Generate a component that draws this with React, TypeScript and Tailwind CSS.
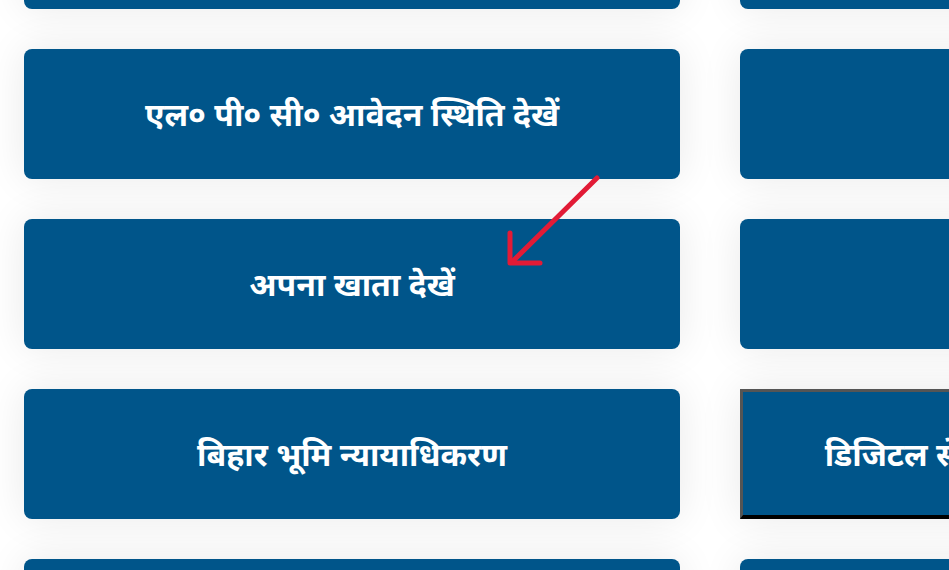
import React from "react";

const left = [
  "भू-नक्शा देखें",
  "एल० पी० सी० आवेदन स्थिति देखें",
  "अपना खाता देखें",
  "बिहार भूमि न्यायाधिकरण",
  "ऑनलाइन भुगतान",
];
const right = [
  "भू-लगान",
  "दाखिल-खारिज",
  "भूमि विवरण",
  "डिजिटल सेवा केंद्र का पता यहाँ से लगाएं",
  "जमाबंदी",
];

const font = { fontFamily: '"Noto Sans", "Noto Sans Devanagari", sans-serif' };

function Btn({ text, bordered }: { text: string; bordered?: boolean }) {
  if (bordered) {
    return (
      <div className="h-[130px] w-[656px] flex items-center justify-center bg-[#00558a] border-t-[3px] border-l-[3px] border-r-[3px] border-b-[4px] border-t-[#555] border-l-[#555] border-r-[#555] border-b-black shadow-[0_0_40px_rgba(0,0,0,0.09)]">
        <span className="text-white font-bold text-[32px] whitespace-nowrap" style={font}>
          {text}
        </span>
      </div>
    );
  }
  return (
    <div className="h-[130px] w-[656px] flex items-center justify-center bg-[#00558a] rounded-[8px] shadow-[0_0_40px_rgba(0,0,0,0.09)]">
      <span className="text-white font-bold text-[32px] whitespace-nowrap" style={font}>
        {text}
      </span>
    </div>
  );
}

export default function App() {
  return (
    <div className="relative w-[949px] h-[570px] overflow-hidden bg-white">
      <div className="grid grid-cols-[656px_656px] gap-x-[60px] gap-y-[40px] pl-[24px] -mt-[121px]">
        {left.map((t, i) => (
          <React.Fragment key={i}>
            <Btn text={t} />
            <Btn text={right[i]} bordered={i === 3} />
          </React.Fragment>
        ))}
      </div>
      <svg className="absolute left-0 top-0 pointer-events-none" width="949" height="570">
        <g stroke="#e21b36" strokeWidth="5" strokeLinecap="round" fill="none">
          <line x1="597" y1="178" x2="512" y2="262" />
          <polyline points="510,233 510,263 540,263" strokeLinejoin="round" />
        </g>
      </svg>
    </div>
  );
}
